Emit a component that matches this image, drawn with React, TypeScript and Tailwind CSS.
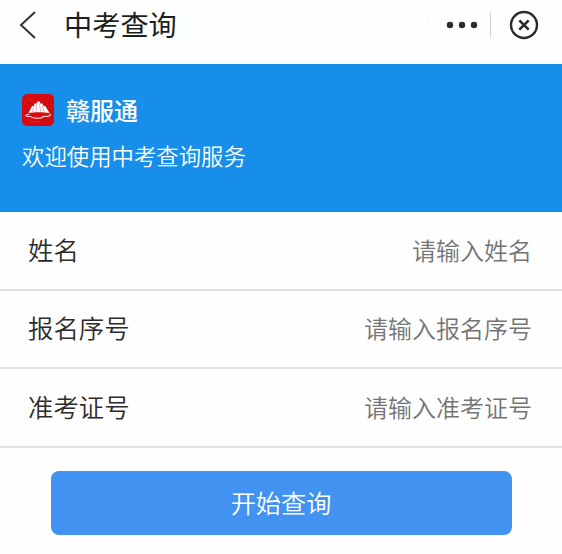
type FieldProps = {
  label: string;
  name: string;
  placeholder: string;
};

const fields: FieldProps[] = [
  { label: '姓名', name: 'name', placeholder: '请输入姓名' },
  { label: '报名序号', name: 'serial', placeholder: '请输入报名序号' },
  { label: '准考证号', name: 'ticket', placeholder: '请输入准考证号' },
];

function Logo() {
  return (
    <svg className="w-8 h-8" viewBox="0 0 32 32" fill="none">
      <rect width="32" height="32" rx="5" fill="#d60b12" />
      <path d="M2 10l5-6 4 5M5 24l5 4 8-1" stroke="#de2c2b" strokeWidth="0.7" />
      <path
        d="M6.500 19L10 12h1.800l.7-2.500h2.200l.5-2h2.400l.8 2h1.900l1.200 2.500h1.700l4.300 7c-6-1-15-1-21 0z"
        fill="#fff"
      />
      <path d="M12.300 12l-2 6M15 10l-.8 7.500M17.700 10l.8 7.500M20.300 12l2 6" stroke="#d60b12" strokeWidth="0.35" />
      <path
        d="M7 20.200c-5 .6-4.500 2.600 1.500 2.200 1.500 2 9 2.200 12 1.200 1-.3 1-1.200 0-1.200h2c6 .2 8-1.600 5-2.400"
        stroke="#fff"
        strokeWidth="1"
        strokeLinecap="round"
      />
    </svg>
  );
}

function Header() {
  return (
    <header className="flex h-16 items-start justify-between bg-[#fdfefe] pl-[18px] pr-[9px]">
      <div className="flex h-[49px] items-center">
        <svg className="w-5 h-7" viewBox="0 0 20 28" fill="none" stroke="#333" strokeWidth="2">
          <path d="M17 1L3 14l14 13" />
        </svg>
        <h1 className="ml-[26px] text-[28.200px] leading-none text-[#1d1d1d]">中考查询</h1>
      </div>
      <div className="mt-px flex h-12 w-[127px] items-center rounded-full border border-[#fafafa] bg-[#fefefe] pl-[19px]">
        <svg className="w-8 h-2" viewBox="0 0 32 8" fill="#2b2b2b">
          <circle cx="4" cy="4" r="3.2" />
          <circle cx="16" cy="4" r="3.2" />
          <circle cx="28" cy="4" r="3.2" />
        </svg>
        <span className="ml-[12px] h-[26px] w-px bg-[#d4d4d4]" />
        <svg className="ml-[18px] w-[30px] h-[30px]" viewBox="0 0 30 30" fill="none" stroke="#2b2b2b">
          <circle cx="15" cy="15" r="13" strokeWidth="2.400" />
          <path d="M10.300 10.300l9.400 9.400M19.700 10.300l-9.400 9.400" strokeWidth="2.600" />
        </svg>
      </div>
    </header>
  );
}

function Banner() {
  return (
    <section className="h-[148px] bg-[#168eea] px-[22px] pt-[30px] text-white">
      <div className="flex items-center gap-3">
        <Logo />
        <span className="text-[24px] font-medium leading-8">赣服通</span>
      </div>
      <p className="mt-[17px] text-[22.400px] leading-6 font-[350]">欢迎使用中考查询服务</p>
    </section>
  );
}

function Field({ label, name, placeholder }: FieldProps) {
  return (
    <label className="flex h-[78.500px] items-center justify-between border-b-2 border-[#e0e0e0] pb-px pl-7 pr-[30px]">
      <span className="pb-0.5 text-[25.400px] font-[350] text-[#2b2b2b]">{label}</span>
      <input
        name={name}
        placeholder={placeholder}
        className="w-[240px] text-right text-[24px] font-[350] outline-none placeholder:text-[#747474]"
      />
    </label>
  );
}

export default function App() {
  return (
    <main className="h-[554px] w-[562px] overflow-hidden bg-[#fefefe] font-['Noto_Sans_CJK_SC',sans-serif]">
      <Header />
      <Banner />
      <form>
        {fields.map((field) => (
          <Field key={field.name} {...field} />
        ))}
        <button
          type="button"
          className="mx-auto mt-[23.500px] block h-16 w-[461px] rounded-lg bg-[#4292f1] pb-px text-[25.200px] font-[350] text-white"
        >
          开始查询
        </button>
      </form>
    </main>
  );
}
